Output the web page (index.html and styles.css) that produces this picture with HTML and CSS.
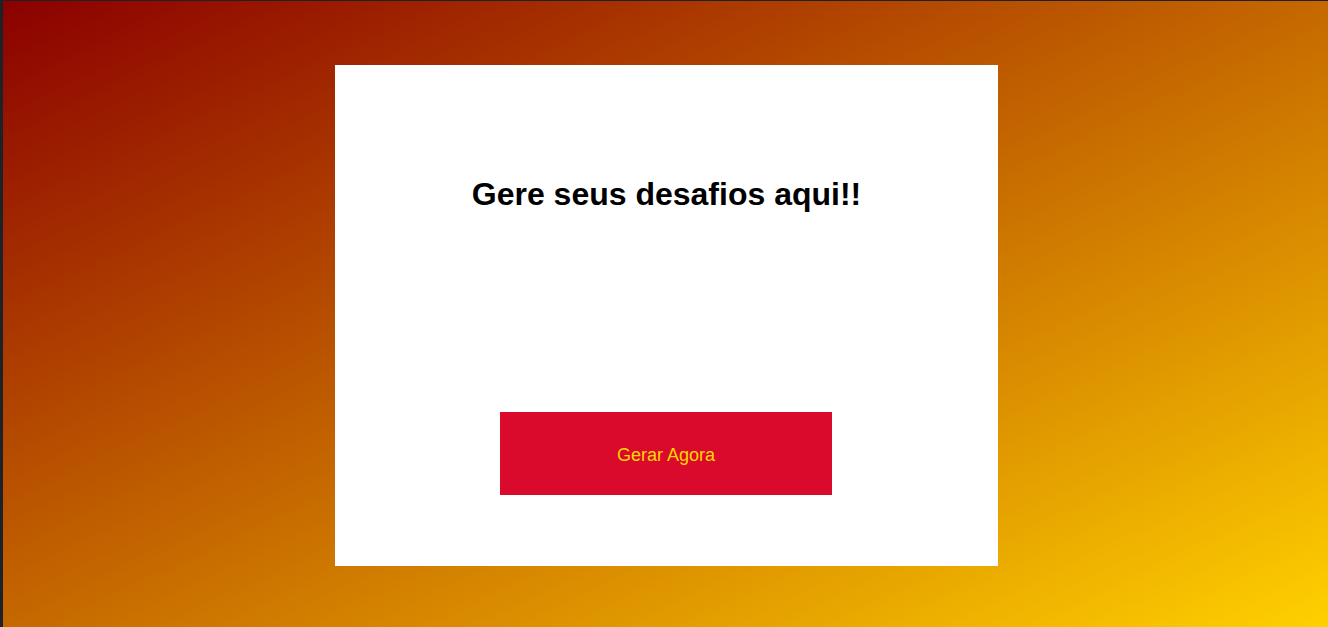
FILE: index.html
```html
<!DOCTYPE html>
<html lang="pt-BR">
<head>
<meta charset="utf-8">
<title>Gerador de desafios</title>
<link rel="stylesheet" href="styles.css">
</head>
<body>
<main class="stage">
  <section class="card">
    <h1 class="title">Gere seus desafios aqui!!</h1>
    <button class="generate" type="button">Gerar Agora</button>
  </section>
</main>
</body>
</html>
```

FILE: styles.css
```css
html, body {
  margin: 0;
  padding: 0;
  height: 100%;
}

body {
  background: #1e2226;
  padding: 1px 0 0 3px;
  box-sizing: border-box;
  font-family: "Liberation Sans", Arial, sans-serif;
}

.stage {
  height: 100%;
  box-sizing: border-box;
  padding: 2px 0 0 2px;
  background: linear-gradient(to bottom right, #8b0000, #ffd000);
  display: flex;
  align-items: center;
  justify-content: center;
}

.card {
  width: 663px;
  height: 501px;
  background: #ffffff;
  display: flex;
  flex-direction: column;
  align-items: center;
  box-sizing: border-box;
  padding-top: 111px;
}

.title {
  margin: 0;
  font-size: 32px;
  line-height: 37px;
  font-weight: bold;
  color: #000000;
}

.generate {
  margin: 199px 1px 0 0;
  width: 332px;
  height: 83px;
  border: none;
  background: #d90a2c;
  color: #ffd700;
  font-family: "Liberation Sans", Arial, sans-serif;
  font-size: 18px;
  padding: 5px 0 0 0;
  cursor: pointer;
}
```
